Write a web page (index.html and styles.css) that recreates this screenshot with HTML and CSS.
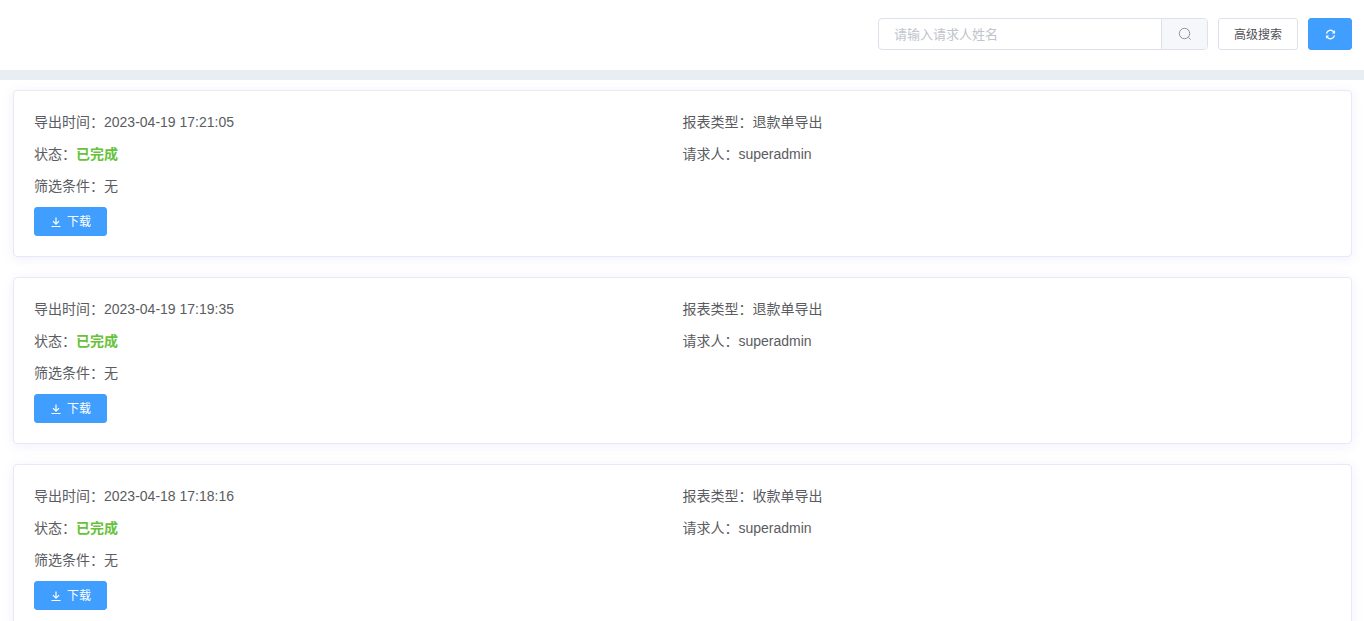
FILE: index.html
```html
<!DOCTYPE html>
<html lang="zh-CN">
<head>
<meta charset="utf-8">
<title>导出记录</title>
<link rel="stylesheet" href="styles.css">
</head>
<body>
<header class="toolbar">
  <div class="search">
    <div class="search-input">请输入请求人姓名</div>
    <div class="search-append">
      <svg class="icon-search" viewBox="0 0 14 14" width="14" height="14"><circle cx="6.5" cy="6.5" r="5.2"/><path d="M10.3 10.3 L12.6 12.6"/></svg>
    </div>
  </div>
  <button class="btn btn-plain"><span class="btn-label">高级搜索</span></button>
  <button class="btn btn-icon">
    <svg class="icon-refresh" viewBox="0 0 12 12" width="11" height="11"><path d="M1.6 5 A4.5 4.5 0 0 1 9.6 3.2"/><path d="M10.4 7 A4.5 4.5 0 0 1 2.4 8.8"/><path class="fill" d="M11 1.4 V5 H7.4 Z"/><path class="fill" d="M1 10.6 V7 H4.6 Z"/></svg>
  </button>
</header>
<main class="list">
  <article class="card">
    <div class="row">导出时间：2023-04-19 17:21:05</div>
    <div class="row">报表类型：退款单导出</div>
    <div class="row">状态：<b class="done">已完成</b></div>
    <div class="row">请求人：superadmin</div>
    <div class="row wide">筛选条件：无</div>
    <div class="wide"><button class="btn btn-download"><svg class="icon-download" viewBox="0 0 12 12" width="12" height="12"><path d="M6 1.5 V8 M3 5.2 L6 8.2 L9 5.2 M1.5 10.5 H10.5"/></svg><span class="btn-label-tight">下载</span></button></div>
  </article>
  <article class="card">
    <div class="row">导出时间：2023-04-19 17:19:35</div>
    <div class="row">报表类型：退款单导出</div>
    <div class="row">状态：<b class="done">已完成</b></div>
    <div class="row">请求人：superadmin</div>
    <div class="row wide">筛选条件：无</div>
    <div class="wide"><button class="btn btn-download"><svg class="icon-download" viewBox="0 0 12 12" width="12" height="12"><path d="M6 1.5 V8 M3 5.2 L6 8.2 L9 5.2 M1.5 10.5 H10.5"/></svg><span class="btn-label-tight">下载</span></button></div>
  </article>
  <article class="card">
    <div class="row">导出时间：2023-04-18 17:18:16</div>
    <div class="row">报表类型：收款单导出</div>
    <div class="row">状态：<b class="done">已完成</b></div>
    <div class="row">请求人：superadmin</div>
    <div class="row wide">筛选条件：无</div>
    <div class="wide"><button class="btn btn-download"><svg class="icon-download" viewBox="0 0 12 12" width="12" height="12"><path d="M6 1.5 V8 M3 5.2 L6 8.2 L9 5.2 M1.5 10.5 H10.5"/></svg><span class="btn-label-tight">下载</span></button></div>
  </article>
</main>
</body>
</html>
```
FILE: styles.css
```css
* { box-sizing: border-box; }
html, body { margin: 0; height: 100%; overflow: hidden; }
body {
  background: #fff;
  color: #5a5c61;
  font-family: "Liberation Sans", "Noto Sans CJK SC", sans-serif;
  font-size: 14px;
}
.toolbar {
  height: 80px;
  padding: 18px 12px 0 0;
  display: flex;
  justify-content: flex-end;
  align-items: flex-start;
  gap: 10px;
  border-bottom: 10px solid #e9eef2;
}
.search {
  width: 330px;
  height: 32px;
  display: flex;
  border: 1px solid #dfe1ea;
  border-radius: 4px;
  overflow: hidden;
}
.search-input {
  flex: 1;
  padding: 1px 0 0 15px;
  line-height: 30px;
  font-size: 13px;
  color: #c0c4cc;
}
.search-append {
  width: 46px;
  background: #f5f7fa;
  border-left: 1px solid #dfe1ea;
  display: flex;
  align-items: center;
  justify-content: center;
}
.icon-search { fill: none; stroke: #909399; stroke-width: 1; }
.btn {
  font-family: inherit;
  font-size: 12px;
  border-radius: 3px;
  cursor: pointer;
  display: inline-flex;
  align-items: center;
  justify-content: center;
}
.btn-label { margin-top: -1px; }
.btn-label-tight { margin-top: -2px; }
.btn-plain {
  width: 80px;
  height: 32px;
  background: #fff;
  border: 1px solid #dfe1ea;
  color: #4f5155;
  padding: 0;
}
.btn-icon {
  width: 44px;
  height: 32px;
  background: #409eff;
  border: 1px solid #409eff;
  padding: 0;
}
.icon-refresh { fill: none; stroke: #fff; stroke-width: 1.4; }
.icon-refresh .fill { fill: #fff; stroke: none; }
.list {
  padding: 10px 12px 0 13px;
  display: flex;
  flex-direction: column;
  gap: 20px;
}
.card {
  height: 167px;
  flex: none;
  padding: 15px 20px 20px;
  background: #fff;
  border: 1px solid #e7e9f6;
  border-radius: 4px;
  box-shadow: 0 2px 12px 0 rgba(90, 100, 220, 0.09);
  display: grid;
  grid-template-columns: 1fr 1fr;
  grid-auto-rows: min-content;
}
.row { height: 32px; line-height: 32px; }
.wide { grid-column: 1 / -1; }
.done { color: #67c23a; font-weight: 700; }
.btn-download {
  width: 73px;
  height: 29px;
  margin-top: 5px;
  background: #409eff;
  border: 1px solid #409eff;
  color: #fff;
  padding: 0;
  gap: 5px;
}
.icon-download { fill: none; stroke: #fff; stroke-width: 1.2; }
```
